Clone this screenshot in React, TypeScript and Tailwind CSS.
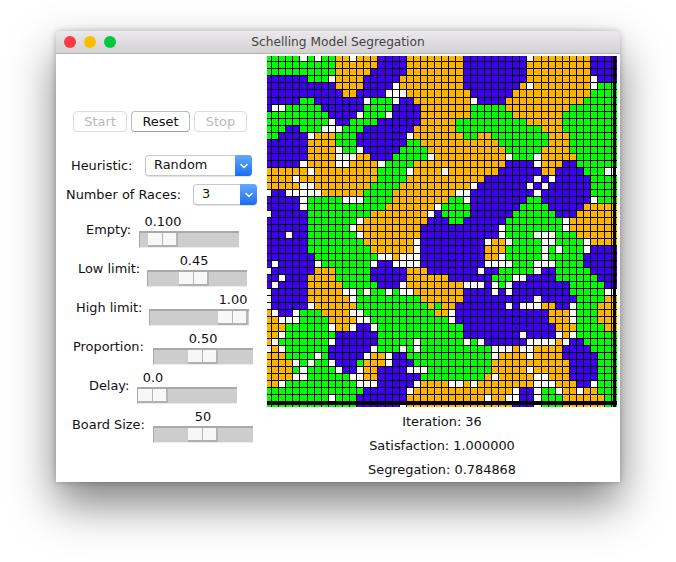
import { ChevronDown } from "lucide-react"

const left = [
  "GGGGGWGWGGOOWOOOBBBBOOOOO",
  "GGGGGGGGGGOOOOOOBBBBOOOOO",
  "GGGGGGGGGGOOOOOBBBBBOOOOO",
  "BBBBBBGGGWOOOOBBBBBOOOOOO",
  "BBBBBBBBBBOOOOBBBBWOOOOOO",
  "BBBBBBBBBBBOOBBBBWWWOOOOO",
  "BBBBBGGBBBBBBBWGGGWBBOOOO",
  "BWWGGGGGBBBBBBGGGGBBBBOOO",
  "GGGGGGGGGBBBBWGGGWBBBBOOO",
  "GGGGGGGGGWBBGGGGBBBBBBOOO",
  "GGGBBGGGWWWGGGBBBBBBBOOOO",
  "GGBBBBWOOOGGGBBBBBBBWOOOO",
  "BBBBBBOOOOGGGBBBBBBBGGOOO",
  "BBBBBBOOOOWGGWBBBBBGGGGOO",
  "BBBBBBOOOOWWWOOBBBGGGGGWO",
  "BBBBBWOOOOWWOOOOWGGGGOOOO",
  "OOOOOOWOOOOOOOOOGGGGWOOOO",
  "OOOOWOOOOOOOOOOOGGGGOOOOO",
  "OOOOOWWOOOOOOOOGGGGOOOOOO",
  "WBBWWWWWOOOOOOGGGGOOOOOOO",
  "BBBBBWGGGGGWWWGGGGOOOOOOO",
  "BBBBBWGGGGGGGGGGGOOOOOOOW",
  "WBBBBBGGGGGGGGGOOOOOOOOWB",
  "BBBBBBGGGGGGGWOOOOOOOOOBB",
  "BBBBBBGGGGGGWOOOOOOOOOBBB",
  "BBBWBBGGGGGGGWOOOOOOOOBBB",
  "BBBBBBGGGGGGGGOOOOOOOWBBB",
  "BBBBBBGGGGGGGGGOOOOOOWBBB",
  "BBBBBBBGGGGGGGGGWWOWWWBBB",
  "BWBBBBBWGGGGGGGWBBWWWWBBB",
  "WBBBBBBOOOGGGGGBBBBBOOOBB",
  "BBWBBBOOOOGGGGGBBBBBOOOOO",
  "BWBBBBOOOOOGGGGGBBBWOOOOO",
  "WBBBBBOOOOOWWGWGGWGWWOOOO",
  "WBBBBBOOOOOOWGGGGGGGGGOOO",
  "WBBBBBWOOOOOOGGGGGGGGGGOG",
  "OWBBWGGGOOOOWWGGGGGGGGGGO",
  "OOWWWGGGGOOOOWWGGGGGGGGGG",
  "OOOGGGGGGWOOWBBWGGGGGGGGG",
  "OOWGGGGGGGBBBBBBGGGGGGGGG",
  "OWGGGGGGGWBBBBBBGGGGGWGGG",
  "WOWGGGGGGBBBBBBWGGGWGWGGG",
  "OOOGGGGWGBBBBBWOOWBBGGGGG",
  "OOOOWGWGGWBBBGOOOWBBBGGGG",
  "OOOOGWGGGGWBBWOOBBBBWWWGG",
  "OOOOWWGGGGGGWWOOBBBBBBGGG",
  "OOWGGGGGGGGGGWWWBBBBBWOOO",
  "GGGGGGGGGGGGGGBBBBBBWOOOO",
  "GGGGGGGGGWGGGBBBBBBBOOOOO",
  "GGGGGGGGGGGGGBBBBBBWOOOOO",
]

const right = [
  "OOOBBBBBBBBBWOOOOOOOOBBB",
  "OOOBBBBBBBBBOOOOOOOOOBBB",
  "OOOBBBBBBBBBOOOOOOOOOBBB",
  "OOOBBBBBBBBBOOOOOOOOOWBB",
  "OOOBBBBBBBBOWOOOOOOOOWGG",
  "OOOOBBBBBBOOOOOOOOOOOGGG",
  "OOOOWBBBBOOOOOOOOOOOGGGG",
  "OOOOGGGGGOOOOOOOOOGGGGGG",
  "OOOOGGGGGGOOOOOOOGGGGGGG",
  "OOGGGGGGGGGGOOOOOGGGGGGG",
  "OOGGGGGGGGGGGGOOOGGGGGGG",
  "OOOGGOOGGGGGGGGOOOGGGGGG",
  "OOOOOOOOGGGGGGGOOOGGGGGG",
  "OOOOOOOOOGGGGGOOOOGGGGGG",
  "OOOOOOOOOWGGGWOOOOOGGGGG",
  "OOOOOOOOOBBBBWOOOBBGGGGG",
  "WOOOOOOOBBBBBBOOBBBBGGGW",
  "OOOOOOBBBBBBBWBWBBBBBGGG",
  "OOOOWBBBBBBBWBWBBBBBBGGG",
  "OOWWBBBBBBBBBWBBBBBBBGGG",
  "OGGWBBBBBBBBGGBBBBBBBWGG",
  "GGGGBBBBBBBGGGGBBBBBOOOO",
  "GGGGBBBBBBGGGGGGBBBOOOOO",
  "BGGBBBBBBGGGGGGGGWOOOOOO",
  "BBBBBBBBWGGGGGGGGWOOOOOO",
  "BBBBBBBBWGGGGWWWGGGOOOOO",
  "BBBBBBWOOWGGGGWWGGGGWOOO",
  "BBBBBBOOOGGGGGWGWGGGWBBB",
  "BBBBBBOOWGGGGGWGGGGGBBBB",
  "BBBBBBWWWWGGGWWWGGGGBBBB",
  "BBBBBWBBGGGGGWBBGGGGGBBB",
  "OBBBBBBGGGWWBBBBGGGGGGBB",
  "OOOWWWBWGWBBBBBBBBGGGGGB",
  "OOOBBBBWBWBBBBBBBBGGGGGW",
  "OOOBBBBBBBBBBWBBBBBGGGGO",
  "OOBBBBBBBWBWWWOOBBWGGGOO",
  "OWBBBBBBBBBBBBBOOOWGGGOO",
  "GWBBBBBBBBBBBBBOOOWGGGOO",
  "GGGBBBBBBBBBBBBBOOOGGGGO",
  "GGGBBBBBBBBWBBBBWOWGGGGG",
  "GGGWGWBBBBBBWWWWOWBBGGGG",
  "GGGGGGGWWWOWWOOOOBBBBGGG",
  "GGGGGGGWOOOOWOOOOBBBBBGG",
  "GGGGGGGOOOOOOOOOOOBBBBGG",
  "GGGGGGGOOOOOWOOOOOBBBBGG",
  "GGGGGGOWOOOOOWWOOOBBBBGG",
  "OWWOWOOOOOOOOWWWOOOBBWGG",
  "OOOOOOOOOOWBBWGGWOOWOOGG",
  "OOOOOOWOOWWBBWGGGOOOOOOG",
  "OOOOOOOOOOBBBWGGGOOOOOOG",
]

const colors: Record<string, string> = {
  G: "#00ff00",
  B: "#3d00f2",
  O: "#ffb400",
  W: "#ffffff",
}

const PITCH = 7.09

const Board = () => (
  <svg width="350" height="351" className="block bg-black" shapeRendering="crispEdges">
    {left.map((row, r) =>
      (row + right[r] + right[r][23]).split("").map((cell, c) => {
        const x = Math.round(-2 + c * PITCH)
        const y = Math.round(-1 + r * PITCH)
        return (
          <rect
            key={`${r}-${c}`}
            x={x}
            y={y}
            width={Math.round(-2 + (c + 1) * PITCH) - x - 1}
            height={Math.round(-1 + (r + 1) * PITCH) - y - 1}
            fill={colors[cell]}
          />
        )
      })
    )}
    <rect x="346" y="0" width="3" height="351" fill="#000" />
    <rect x="0" y="346" width="350" height="3" fill="#000" />
  </svg>
)

const sliders = [
  { label: "Empty:", value: "0.100", cell: "w-[83px] pl-[30px]", thumb: "pl-[8px]" },
  { label: "Low limit:", value: "0.45", cell: "w-[91px] pl-[22px]", thumb: "pl-[31px]" },
  { label: "High limit:", value: "1.00", cell: "w-[93px] pl-[20px]", thumb: "pl-[68px]" },
  { label: "Proportion:", value: "0.50", cell: "w-[97px] pl-[17px]", thumb: "pl-[34px]" },
  { label: "Delay:", value: "0.0", cell: "w-[81px] pl-[33px]", thumb: "pl-0" },
  { label: "Board Size:", value: "50", cell: "w-[97px] pl-[16px]", thumb: "pl-[34px]" },
]

const Slider = ({ label, value, cell, thumb }: (typeof sliders)[number]) => (
  <div className="flex h-[39px]">
    <div className={`${cell} shrink-0 pt-[8px] leading-[16px] whitespace-nowrap`}>{label}</div>
    <div className="w-[100px]">
      <div className={`${thumb} h-[17px] pt-[1px]`}>
        <div className="w-[30px] ml-px flex justify-center leading-[14px] whitespace-nowrap">{value}</div>
      </div>
      <div className={`${thumb} h-[17px] bg-[#cdcdcd] border-t-2 border-l border-b border-t-[#a9a9a9] border-l-[#a9a9a9] border-b-[#ececec]`}>
        <div className="flex w-[30px] h-[14px]">
          <div className="w-[15px] bg-[#f7f7f7] border-r border-b-2 border-r-[#b5b5b5] border-b-[#b0b0b0]" />
          <div className="w-[15px] bg-[#f7f7f7] border-r-2 border-b-2 border-r-[#b5b5b5] border-b-[#b0b0b0]" />
        </div>
      </div>
    </div>
  </div>
)

const Select = ({ value, width }: { value: string; width: string }) => (
  <div className={`${width} h-[21px] flex rounded-[4px] bg-white border border-[#c8c8c8] border-r-0 shadow-[0_1px_1px_rgba(0,0,0,0.12)]`}>
    <span className="flex-1 pl-[8px] leading-[18px]">{value}</span>
    <span className="w-[17px] -my-px flex items-center justify-center rounded-r-[4px] bg-gradient-to-b from-[#62aafd] to-[#1a6cf0]">
      <ChevronDown size={12} strokeWidth={3} className="text-white" />
    </span>
  </div>
)

export default function App() {
  return (
    <div className="min-h-[562px] bg-white pt-[31px] pl-[56px] overflow-hidden">
      <div
        className="w-[564px] h-[451px] bg-white rounded-t-[5px] shadow-[0_22px_45px_rgba(0,0,0,0.5),0_0_6px_rgba(0,0,0,0.25)] text-[12.9px] text-[#111] overflow-hidden"
        style={{ fontFamily: '"DejaVu Sans", sans-serif' }}
      >
        <div className="relative h-[23px] flex items-center pl-[8px] gap-[8px] bg-gradient-to-b from-[#ebe9eb] to-[#d3d1d3] border-b border-[#b4b4b4]">
          <span className="w-[12px] h-[12px] rounded-full bg-[#fb3a45]" />
          <span className="w-[12px] h-[12px] rounded-full bg-[#fdbd00]" />
          <span className="w-[12px] h-[12px] rounded-full bg-[#00c93e]" />
          <span className="flex-1 text-center pr-[68px] text-[12.2px] text-[#444]">Schelling Model Segregation</span>
        </div>
        <div className="flex">
          <div className="w-[211px] shrink-0">
            <div className="flex gap-[4px] pl-[17px] pt-[57px]">
              <button className="w-[54px] h-[21px] rounded-[4px] border border-[#dcdcdc] text-[#b9b9b9]">Start</button>
              <button className="w-[59px] h-[21px] rounded-[4px] border border-[#bcbcbc] border-b-[#a0a0a0]">Reset</button>
              <button className="w-[53px] h-[21px] rounded-[4px] border border-[#dcdcdc] text-[#b9b9b9]">Stop</button>
            </div>
            <div className="flex items-center pt-[22px] h-[43px] mt-px">
              <span className="pl-[15px] w-[89px] whitespace-nowrap">Heuristic:</span>
              <Select value="Random" width="w-[107px]" />
            </div>
            <div className="flex items-center pt-[9px] h-[30px] -mt-px">
              <span className="pl-[10px] w-[137px] whitespace-nowrap">Number of Races:</span>
              <Select value="3" width="w-[64px]" />
            </div>
            <div className="pt-[9px]">
              {sliders.map((slider) => (
                <Slider key={slider.label} {...slider} />
              ))}
            </div>
          </div>
          <div className="w-[350px] pt-[2px]">
            <Board />
            <div className="pt-[3px] text-center">
              <div className="h-[24px] leading-[24px]">Iteration: 36</div>
              <div className="h-[24px] leading-[24px]">Satisfaction: 1.000000</div>
              <div className="h-[24px] leading-[24px]">Segregation: 0.784868</div>
            </div>
          </div>
        </div>
      </div>
    </div>
  )
}
